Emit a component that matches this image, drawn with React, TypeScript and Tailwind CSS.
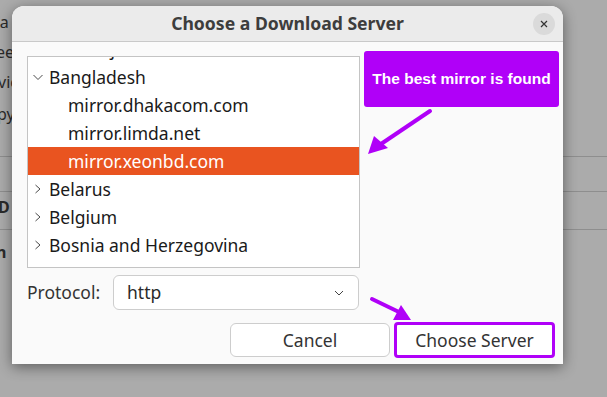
import React from "react";

const ui = { fontFamily: '"Noto Sans", "Open Sans", sans-serif' };

function Chevron({ open }: { open?: boolean }) {
  return (
    <svg width="10" height="10" viewBox="0 0 10 10" className="shrink-0">
      {open ? (
        <path d="M0.5 3 L5 7.5 L9.5 3" fill="none" stroke="#4a4a4a" strokeWidth="1" />
      ) : (
        <path d="M2.5 1 L7 5 L2.5 9" fill="none" stroke="#4a4a4a" strokeWidth="1" />
      )}
    </svg>
  );
}

function Row({
  label,
  depth = 0,
  open,
  selected,
}: {
  label: string;
  depth?: number;
  open?: boolean;
  selected?: boolean;
}) {
  return (
    <div
      className={
        "flex h-[28px] items-center text-[17.5px] " +
        (selected ? "bg-[#e95420] text-white" : "text-[#1a1a1a]")
      }
    >
      {depth === 0 ? (
        <div className="flex w-[21px] justify-start pl-[5px]">
          <Chevron open={open} />
        </div>
      ) : (
        <div className="w-[40px]" />
      )}
      <span>{label}</span>
    </div>
  );
}

export default function App() {
  return (
    <div className="relative h-[397px] w-[607px] overflow-hidden bg-[#ababab]" style={ui}>
      {/* dimmed app behind the dialog */}
      <div className="flex flex-col text-[16px] text-[#2a2a2a]">
        <div className="ml-[-6px] mt-[10px] h-[30px] leading-[24px]">ta</div>
        <div className="ml-[-4px] h-[30px] leading-[24px]">ee</div>
        <div className="ml-[-2px] h-[32px] leading-[24px]">vic</div>
        <div className="ml-[-3px] h-[40px] leading-[24px]">py</div>
        <div className="h-[14px]" />
        <div className="h-[35px] border-t border-[#8e8e8e]" />
        <div className="flex h-[38px] items-center border-t border-[#8e8e8e] pb-[8px] font-bold">
          <span className="ml-[-2px]">D</span>
        </div>
        <div className="flex h-[40px] items-start border-t border-[#8e8e8e] pt-[10px] font-bold">
          <span className="ml-[-4px]">n</span>
        </div>
      </div>

      {/* dialog */}
      <div className="absolute left-[12px] top-[6px] flex h-[358px] w-[551px] flex-col overflow-hidden rounded-t-[12px] bg-[#fafafa] shadow-[0_3px_14px_rgba(0,0,0,0.45)]">
        <div className="relative flex h-[36px] shrink-0 items-center border-b border-[#c9c9c9] bg-[#ebebeb]">
          <div className="w-full text-center text-[17.6px] font-bold text-[#3d3d3d]">
            Choose a Download Server
          </div>
          <div className="absolute right-[8px] top-[7px] flex h-[22px] w-[22px] items-center justify-center rounded-full bg-[#dadada]">
            <svg width="8" height="8" viewBox="0 0 8 8">
              <path d="M1 1 L7 7 M7 1 L1 7" stroke="#333" strokeWidth="1.2" />
            </svg>
          </div>
        </div>

        <div className="flex flex-1 flex-col px-[15px] pt-[14px]">
          <div className="flex gap-[4px]">
            <div className="h-[212px] w-[333px] shrink-0 overflow-hidden border border-[#c4c4c4] bg-white">
              <div className="mt-[-22px]">
                <Row label="Azerbaijan" />
                <Row label="Bangladesh" open />
                <Row label="mirror.dhakacom.com" depth={1} />
                <Row label="mirror.limda.net" depth={1} />
                <Row label="mirror.xeonbd.com" depth={1} selected />
                <Row label="Belarus" />
                <Row label="Belgium" />
                <Row label="Bosnia and Herzegovina" />
              </div>
            </div>
            <div className="relative flex-1">
              <div
                className="mt-[-5px] flex h-[56px] w-[195px] items-center justify-center rounded-[3px] bg-[#b000f8] text-[15.5px] font-bold text-white"
                style={{ fontFamily: '"Liberation Sans", Arial, sans-serif' }}
              >
                The best mirror is found
              </div>
              <svg className="absolute left-0 top-[52px]" width="70" height="50" viewBox="0 0 70 50">
                <path d="M66 3 L14 38" stroke="#b000f8" strokeWidth="4" strokeLinecap="round" />
                <path d="M4 46 L10 28 L24 40 Z" fill="#b000f8" />
              </svg>
            </div>
          </div>

          <div className="mt-[7px] flex items-center gap-[11px]">
            <span className="w-[75px] text-[17.5px] text-[#333]">Protocol:</span>
            <div className="flex h-[35px] w-[246px] items-center justify-between rounded-[6px] border border-[#cdcdcd] bg-white pl-[13px] pr-[14px] text-[17.5px] text-[#2a2a2a]">
              <span>http</span>
              <svg width="10" height="6" viewBox="0 0 10 6">
                <path d="M1 1 L5 5 L9 1" fill="none" stroke="#444" strokeWidth="1" />
              </svg>
            </div>
          </div>

          <div className="relative mr-[-7px] mt-[12px] flex justify-end gap-[4px]">
            <svg className="absolute left-[342px] top-[-26px]" width="50" height="28" viewBox="0 0 50 28">
              <path d="M3 3 L32 17" stroke="#b000f8" strokeWidth="4" strokeLinecap="round" />
              <path d="M42 24 L24 24 L32 9 Z" fill="#b000f8" />
            </svg>
            <button className="mt-[1px] h-[34px] w-[160px] rounded-[6px] border border-[#cdcdcd] bg-white text-[17.5px] text-[#333]">
              Cancel
            </button>
            <button className="h-[36px] w-[161px] rounded-[4px] border-[3px] border-[#b000f8] bg-white text-[17.5px] text-[#333]">
              Choose Server
            </button>
          </div>
        </div>
      </div>
    </div>
  );
}
